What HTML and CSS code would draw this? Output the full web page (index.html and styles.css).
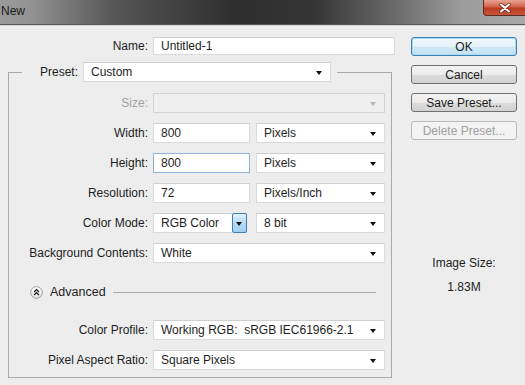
FILE: index.html
```html
<!DOCTYPE html>
<html lang="en">
<head>
  <meta charset="UTF-8" />
  <title>New</title>
  <link rel="stylesheet" href="styles.css">
</head>
<body>
  <div class="titlebar">
    <span class="title">New</span>
    <div class="close">
      <svg width="16" height="10" viewBox="0 0 16 10">
        <path d="M4 1.5 L12 8.5 M12 1.5 L4 8.5" stroke="#6b2114" stroke-width="3.4" stroke-linecap="round"/>
        <path d="M4 1.5 L12 8.5 M12 1.5 L4 8.5" stroke="#fff" stroke-width="2" stroke-linecap="round"/>
      </svg>
    </div>
  </div>

  <div class="dialog">
    <div class="main">
      <div class="name-row">
        <span class="label">Name:</span>
        <div class="field">Untitled-1</div>
      </div>

      <fieldset class="group">
        <legend class="preset">
          <span class="label">Preset:</span>
          <div class="field select">Custom</div>
        </legend>

        <div class="rows">
          <span class="label disabled">Size:</span>
          <div class="field select off"></div>

          <span class="label">Width:</span>
          <div class="pair">
            <div class="field num">800</div>
            <div class="field select">Pixels</div>
          </div>

          <span class="label">Height:</span>
          <div class="pair">
            <div class="field num focus">800</div>
            <div class="field select">Pixels</div>
          </div>

          <span class="label">Resolution:</span>
          <div class="pair">
            <div class="field num">72</div>
            <div class="field select">Pixels/Inch</div>
          </div>

          <span class="label">Color Mode:</span>
          <div class="pair">
            <div class="field mode">RGB Color<span class="drop"></span></div>
            <div class="field select">8 bit</div>
          </div>

          <span class="label">Background Contents:</span>
          <div class="field select">White</div>
        </div>

        <div class="advanced">
          <svg class="chev" width="13" height="13" viewBox="0 0 14 14">
            <defs>
              <linearGradient id="cg" x1="0" y1="0" x2="0" y2="1">
                <stop offset="0" stop-color="#ffffff"/>
                <stop offset="1" stop-color="#dedede"/>
              </linearGradient>
            </defs>
            <circle cx="7" cy="7" r="6.3" fill="url(#cg)" stroke="#9a9a9a"/>
            <path d="M4.4 6.4 L7 3.9 L9.6 6.4 M4.4 9.6 L7 7.1 L9.6 9.6" fill="none" stroke="#1a1a1a" stroke-width="1.4"/>
          </svg>
          <span class="adv-text">Advanced</span>
          <span class="rule"></span>
        </div>

        <div class="rows">
          <span class="label">Color Profile:</span>
          <div class="field select">Working RGB:&nbsp; sRGB IEC61966-2.1</div>

          <span class="label">Pixel Aspect Ratio:</span>
          <div class="field select">Square Pixels</div>
        </div>
      </fieldset>
    </div>

    <div class="side">
      <button class="btn default">OK</button>
      <button class="btn">Cancel</button>
      <button class="btn">Save Preset...</button>
      <button class="btn" disabled>Delete Preset...</button>
      <div class="size-info">
        <div>Image Size:</div>
        <div>1.83M</div>
      </div>
    </div>
  </div>
</body>
</html>
```

FILE: styles.css
```css
body {
  margin: 0;
  background: #ededed;
  font-family: "Liberation Sans", Arial, sans-serif;
  font-size: 12px;
  color: #1e1e1e;
  overflow: hidden;
}
.titlebar {
  height: 24px;
  display: flex;
  justify-content: space-between;
  align-items: flex-start;
  background: linear-gradient(to right, #9a9a9a 0, #929292 6%, #555 22%, #2e2e2e 45%, #353535 60%, #6a6a6a 75%, #9c9c9c 88%, #a8a8a8 100%);
  border-bottom: 1px solid #5a5a5a;
  box-shadow: 0 1px 0 #d6d6d6;
}
.title {
  margin: 4px 0 0 1px;
  color: #1c1c1c;
  font-size: 12px;
}
.close {
  width: 42px;
  height: 15px;
  margin-right: -2px;
  display: flex;
  align-items: center;
  justify-content: center;
  background: linear-gradient(#e9a592, #d2614a 45%, #b93a22 55%, #c9553c);
  border: 1px solid #5b2a20;
  border-top: 0;
  border-radius: 0 0 0 4px;
}
.dialog {
  display: flex;
  padding-top: 12px;
}
.main {
  width: 395px;
}
.label {
  text-align: right;
  line-height: 20px;
  white-space: nowrap;
}
.label.disabled {
  color: #a3a3a3;
}
.name-row {
  display: grid;
  grid-template-columns: 148px 242px;
  gap: 5px;
}
.name-row .field {
  height: 18px;
  line-height: 16px;
}
.name-row .label {
  line-height: 18px;
}
.field {
  position: relative;
  box-sizing: border-box;
  height: 20px;
  line-height: 18px;
  padding-left: 7px;
  background: #fff;
  border: 1px solid #dadada;
  border-top-color: #cfcfcf;
  white-space: nowrap;
}
.field.focus {
  border-color: #8fb3d6;
}
.select::after {
  content: "";
  position: absolute;
  right: 8px;
  top: 8px;
  border-left: 3.5px solid transparent;
  border-right: 3.5px solid transparent;
  border-top: 4px solid #111;
}
.select.off {
  background: #efefef;
  border-color: #d2d2d2;
}
.select.off::after {
  border-top-color: #b5b5b5;
}
.group {
  margin: 7px 0 0 8px;
  padding: 11px 6px 7px 0;
  width: 384px;
  box-sizing: border-box;
  border: 1px solid #a9a9a9;
  min-width: 0;
}
.preset {
  margin-left: 13px;
  padding: 0 6px 0 0;
  display: flex;
  gap: 5px;
}
.preset .label {
  width: 56px;
}
.preset .select {
  width: 248px;
}
.rows {
  display: grid;
  grid-template-columns: 139px 232px;
  column-gap: 5px;
  row-gap: 10px;
}
.pair {
  display: flex;
  justify-content: space-between;
}
.num {
  width: 97px;
}
.pair .select {
  width: 129px;
}
.mode {
  width: 94px;
  display: flex;
  justify-content: space-between;
  padding-right: 0;
}
.drop {
  position: relative;
  width: 15px;
  height: 20px;
  margin: -1px -1px 0 0;
  box-sizing: border-box;
  border: 1px solid #3d7fb0;
  border-radius: 2px;
  background: linear-gradient(#e3f2fc, #b4dbf4 50%, #9fd0f0);
}
.drop::after {
  content: "";
  position: absolute;
  left: 3px;
  top: 8px;
  border-left: 3.5px solid transparent;
  border-right: 3.5px solid transparent;
  border-top: 4px solid #111;
}
.advanced {
  display: flex;
  align-items: center;
  height: 18px;
  margin: 20px 0 19px;
  padding-left: 21px;
}
.chev {
  flex: none;
}
.adv-text {
  margin-left: 7px;
  font-size: 12.5px;
}
.rule {
  flex: 1;
  height: 1px;
  margin: 0 9px 0 7px;
  background: #a9a9a9;
}
.side {
  width: 106px;
  margin-left: 16px;
  display: flex;
  flex-direction: column;
  gap: 9px;
}
.btn {
  height: 19px;
  padding: 0;
  font-family: inherit;
  font-size: 12px;
  color: #1a1a1a;
  border: 1px solid #707070;
  border-radius: 3px;
  background: linear-gradient(#f4f4f4, #ebebeb 50%, #dcdcdc 51%, #d2d2d2);
}
.btn.default {
  border-color: #3c7fb1;
  box-shadow: inset 0 0 0 1px #a6dcf5;
  background: linear-gradient(#f2f9fd, #e4f2fa 50%, #d1e9f7 51%, #c4e2f4);
}
.btn:disabled {
  color: #a0a0a0;
  border-color: #b5b9bc;
  background: #f3f3f3;
}
.size-info {
  margin-top: 102px;
  text-align: center;
  line-height: 24px;
}
```
